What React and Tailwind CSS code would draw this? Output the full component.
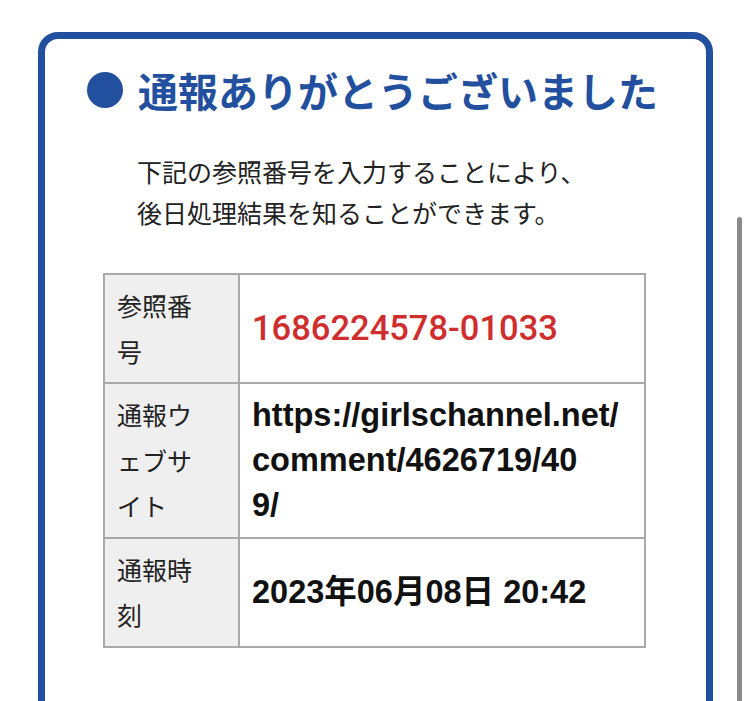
const jp = { fontFamily: '"Noto Sans CJK JP", "Noto Sans", sans-serif' };
const latin = { fontFamily: '"Liberation Sans", "Noto Sans CJK JP", sans-serif' };

const rows = [
  {
    label: ['参照番', '号'],
    value: (
      <span className="block text-[34.5px] font-medium leading-[45px] text-[#cf2e2e]" style={{ fontFamily: 'Roboto, "Liberation Sans", sans-serif' }}>
        1686224578-01033
      </span>
    ),
  },
  {
    label: ['通報ウ', 'ェブサ', 'イト'],
    value: (
      <span className="block text-[32.5px] font-bold leading-[45px] text-[#111]" style={latin}>
        https://girlschannel.net/
        <br />
        comment/4626719/40
        <br />
        9/
      </span>
    ),
  },
  {
    label: ['通報時', '刻'],
    value: (
      <span className="block text-[32.5px] font-bold leading-[45px] text-[#111]" style={latin}>
        2023年06月08日 20:42
      </span>
    ),
  },
];

export default function App() {
  return (
    <div className="relative min-h-screen overflow-hidden bg-white pt-8" style={jp}>
      {/* Card */}
      <div className="ml-[38px] w-[675px] rounded-[20px] border-[7px] border-[#23509e] pl-[42px] pt-[21px] pb-[120px]">
        <div className="flex h-[60px] items-center gap-[15px]">
          <span className="h-[36px] w-[36px] shrink-0 rounded-full bg-[#23509e]" />
          <h1 className="text-[40px] font-bold leading-[60px] text-[#23509e]">通報ありがとうございました</h1>
        </div>

        <p className="mt-[31px] pl-[50px] text-[25px] leading-[41px] text-[#222]">
          下記の参照番号を入力することにより、
          <br />
          後日処理結果を知ることができます。
        </p>

        <table className="mt-[40px] ml-[16px] w-[543px] border-collapse">
          <tbody>
            {rows.map((r, i) => (
              <tr key={i}>
                <th className="w-[135px] border-2 border-[#a9a9a9] bg-[#efefef] py-[8px] pl-3 text-left align-top text-[25px] font-normal leading-[45.5px] text-[#222]">
                  {r.label.map((l, j) => (
                    <div key={j}>{l}</div>
                  ))}
                </th>
                <td className="border-2 border-[#a9a9a9] py-[8px] pl-3 align-middle">{r.value}</td>
              </tr>
            ))}
          </tbody>
        </table>
      </div>

      {/* scroll indicator */}
      <div className="absolute left-[737px] top-[217px] h-[600px] w-[5px] rounded-full bg-[#8a8a8a]" />
    </div>
  );
}
